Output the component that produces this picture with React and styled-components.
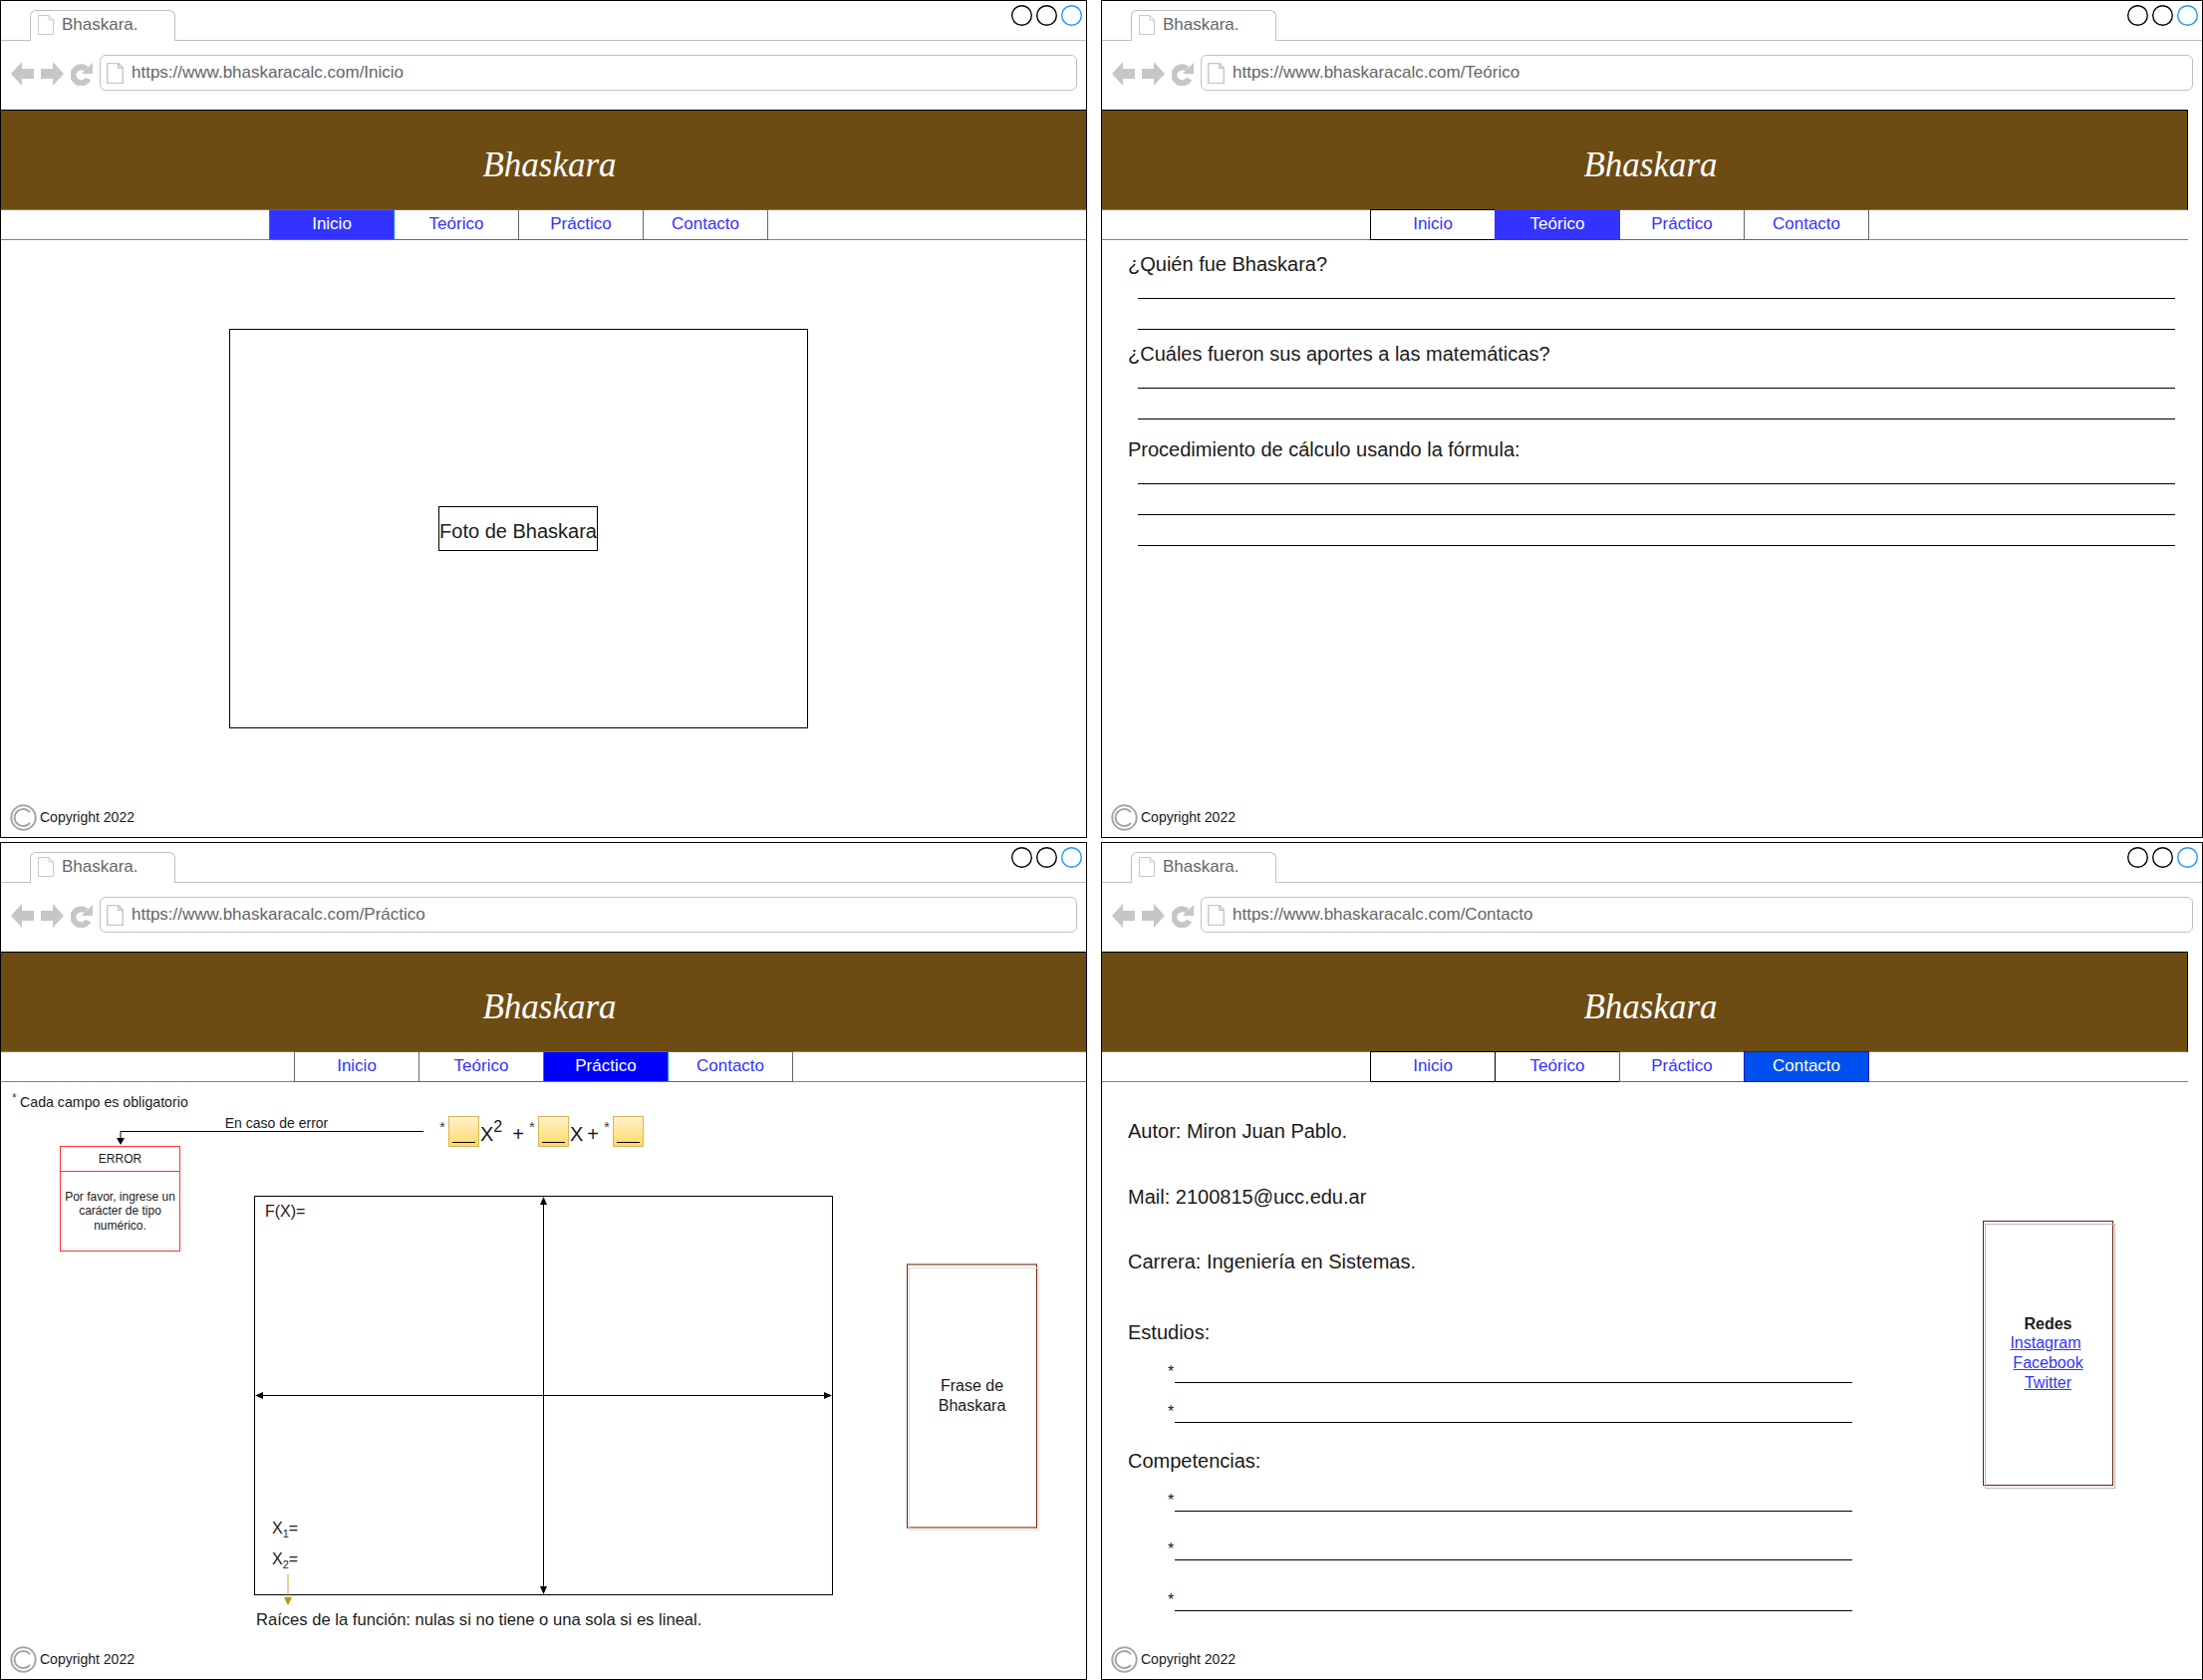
import styled, { createGlobalStyle } from "styled-components";

const GlobalStyle = createGlobalStyle`
  html, body { margin: 0; padding: 0; background: #fff; }
  body { font-family: "Liberation Sans", Arial, sans-serif; color: #1a1a1a; }
  * { box-sizing: border-box; }
`;

const Sheet = styled.div`
  display: grid;
  grid-template-columns: 1091px 1106px;
  grid-template-rows: 841px 841px;
  column-gap: 14px;
  row-gap: 4px;
  width: 2211px;
  height: 1686px;
  overflow: hidden;
`;

const Window = styled.section`
  display: flex;
  flex-direction: column;
  border: 1px solid #000;
  overflow: hidden;
`;

const TabBar = styled.div`
  display: flex;
  height: 40px;
  flex: none;
  padding: 0 4px 0 29px;
  border-bottom: 1px solid #c0c0c0;
`;

const BrowserTab = styled.div`
  display: flex;
  align-items: center;
  gap: 8px;
  width: 146px;
  height: 31px;
  margin-top: 9px;
  padding: 0 0 2px 7px;
  background: #fff;
  border: 1px solid #c0c0c0;
  border-bottom: 0;
  border-radius: 6px 6px 0 0;
  font-size: 17px;
  color: #666;
`;

const Controls = styled.div`
  display: flex;
  gap: 4px;
  margin: 4px 0 0 auto;
`;

const Dot = styled.span`
  width: 21px;
  height: 21px;
  border-radius: 50%;
  box-shadow: inset 0 0 0 1.4px ${p => p.$blue ? "#2196f3" : "#000"};
`;

const Toolbar = styled.div`
  display: flex;
  align-items: flex-start;
  height: 69px;
  flex: none;
  padding: 14px 9px 0 10px;
`;

const NavIcon = styled.svg`
  flex: none;
  margin: 7px 7px 0 0;
  fill: #c6c6c6;
`;

const UrlBar = styled.div`
  display: flex;
  flex: 1;
  align-items: center;
  gap: 8px;
  height: 36px;
  padding-left: 6px;
  border: 1px solid #c0c0c0;
  border-radius: 6px;
  font-size: 17px;
  color: #666;
`;

const Page = styled.div`
  display: flex;
  flex: 1;
  flex-direction: column;
  width: ${p => p.$wide ? "1090px" : "100%"};
  min-height: 0;
`;

const Banner = styled.header`
  display: flex;
  align-items: center;
  justify-content: center;
  flex: none;
  height: 101px;
  padding: 10px 0 0 12px;
  background: #6d4c13;
  border-top: 1px solid #000;
  border-bottom: 1px solid #808080;
  border-right: ${p => p.$edge ? "1px solid #000" : "0"};
`;

const Title = styled.h1`
  margin: 0;
  font-family: "Liberation Serif", "Times New Roman", serif;
  font-size: 35px;
  font-style: italic;
  font-weight: 400;
  color: #fff;
`;

const Nav = styled.nav`
  display: flex;
  align-items: flex-start;
  flex: none;
  height: 30px;
  padding-left: ${p => p.$offset}px;
  border-bottom: 1px solid #808080;
`;

const NavTab = styled.a`
  display: flex;
  align-items: center;
  justify-content: center;
  position: relative;
  width: 126px;
  height: 31px;
  margin: -1px 0 0 -1px;
  padding-bottom: 1px;
  font-size: 17px;
  background: ${p => p.$fill || "#fff"};
  color: ${p => p.$fill ? "#fff" : "#3333ff"};
  z-index: ${p => p.$fill ? 1 : 0};
  border: 1px solid ${p => p.$fill ? p.$line : p.$dark ? "#000" : "#666"};
`;

const Body = styled.main`
  display: flex;
  flex: 1;
  flex-direction: column;
  min-height: 0;
`;

const Footer = styled.footer`
  display: flex;
  align-items: center;
  gap: 3px;
  flex: none;
  height: 26px;
  margin: auto 0 7px 9px;
  font-size: 14px;
`;

/* Inicio */
const PhotoFrame = styled.div`
  display: flex;
  align-items: center;
  justify-content: center;
  width: 581px;
  height: 401px;
  margin: 89px 0 0 229px;
  border: 1px solid #000;
`;

const PhotoLabel = styled.div`
  display: flex;
  align-items: center;
  justify-content: center;
  width: 160px;
  height: 45px;
  margin-right: 1px;
  padding-top: 6px;
  font-size: 20px;
  border: 1px solid #000;
`;

/* Teorico */
const TheoryBlock = styled.div`
  margin: ${p => p.$top}px 0 0 26px;
`;

const Question = styled.h2`
  margin: 0 0 -8px;
  font-size: 20px;
  font-weight: 400;
  line-height: 24px;
`;

const TheoryRule = styled.div`
  width: 1041px;
  height: 1px;
  margin: 30px 0 0 10px;
  background: #000;
`;

/* Practico */
const Note = styled.p`
  margin: 10px 0 6px 11px;
  font-size: 14.2px;
  line-height: 16px;
`;

const Star = styled.sup`
  display: inline-block;
  width: ${p => p.$w || 9}px;
  font-size: 12px;
  line-height: 1;
  vertical-align: 5px;
  color: #444;
`;

const TopRow = styled.div`
  display: flex;
  height: 30px;
  padding-left: 59px;
`;

const ErrorLink = styled.div`
  display: flex;
  flex-direction: column;
  align-items: center;
  width: 365px;
  height: 30px;
  font-size: 14px;
`;

const ErrorLabel = styled.span`
  margin-top: -1px;
  padding-left: 70px;
  line-height: 16px;
`;

const Formula = styled.div`
  display: flex;
  align-items: flex-start;
  height: 31px;
  margin-left: 16px;
`;

const FormulaStar = styled.span`
  width: 9px;
  margin-left: ${p => p.$gap || 0}px;
  padding-top: 2px;
  font-size: 15px;
  color: #444;
`;

const FieldBox = styled.div`
  display: flex;
  justify-content: center;
  align-items: flex-end;
  width: 31px;
  height: 31px;
  padding-bottom: 1px;
  background: linear-gradient(#fff2cc, #ffd966);
  border: 1px solid #d6b656;
`;

const FieldBlank = styled.span`
  width: 23px;
  height: 1px;
  margin-bottom: 2px;
  background: #000;
`;

const Letter = styled.span`
  margin-left: 1px;
  font-size: 20px;
  line-height: 36px;
`;

const Power = styled.span`
  font-size: 16px;
  line-height: 22px;
`;

const Plus = styled.span`
  margin-left: ${p => p.$gap}px;
  font-size: 20px;
  line-height: 36px;
`;

const MainRow = styled.div`
  display: flex;
  align-items: flex-start;
`;

const ErrorBox = styled.div`
  display: flex;
  flex-direction: column;
  flex: none;
  width: 121px;
  height: 106px;
  margin-left: 59px;
  border: 1px solid #ff3333;
  font-size: 12px;
  text-align: center;
`;

const ErrorHead = styled.div`
  display: flex;
  align-items: center;
  justify-content: center;
  height: 25px;
  border-bottom: 1px solid #ff3333;
`;

const ErrorText = styled.div`
  display: flex;
  flex: 1;
  align-items: center;
  justify-content: center;
  line-height: 14.5px;
`;

const GraphColumn = styled.div`
  flex: none;
  margin: 50px 0 0 74px;
`;

const Graph = styled.div`
  display: flex;
  flex-direction: column;
  position: relative;
  width: 581px;
  height: 401px;
  padding: 5px 0 24px 10px;
  border: 1px solid #000;
  font-size: 16px;
  line-height: 20px;
`;

const Axes = styled.svg`
  position: absolute;
  top: -1px;
  left: -1px;
`;

const RootArrow = styled.svg`
  position: absolute;
  top: 379px;
  left: 27px;
`;

const RootLabel = styled.div`
  margin: ${p => p.$top || 0}px 0 0 7px;

  sub {
    font-size: 11px;
    line-height: 0;
  }
`;

const Caption = styled.p`
  margin: 15px 0 0 2px;
  font-size: 16.6px;
  line-height: 20px;
`;

const NoteCard = styled.div`
  display: flex;
  flex-direction: column;
  align-items: center;
  justify-content: center;
  position: relative;
  flex: none;
  width: 131px;
  height: ${p => p.$h}px;
  margin: ${p => p.$top}px 0 0 ${p => p.$left}px;
  border: 1px solid #6d1f00;
  border-color: ${p => p.$soft ? "#b58a7a #6d1f00" : "#6d1f00"};
  border-top-width: ${p => p.$soft ? 2 : 1}px;
  border-bottom-width: ${p => p.$soft ? 2 : 1}px;
  font-size: 16px;
  line-height: 19.6px;
  text-align: center;

  /* the offset grey frame drawn behind the card */
  &::before {
    content: "";
    position: absolute;
    inset: 2px -3px -4px 1px;
    border: 1px solid ${p => p.$soft ? "#ddd" : "#bbb"};
  }
`;

/* Contacto */
const ContactColumn = styled.div`
  flex: none;
  width: 884px;
  padding-left: 26px;
`;

const ContactLine = styled.p`
  margin: ${p => p.$top}px 0 0;
  font-size: 20px;
  line-height: 24px;
`;

const Bullet = styled.div`
  display: flex;
  align-items: flex-end;
  height: 20px;
  margin: ${p => p.$top}px 0 0 40px;
  font-size: 16px;
`;

const BulletStar = styled.span`
  width: 7px;
  align-self: flex-start;
`;

const BulletRule = styled.span`
  width: 680px;
  height: 1px;
  background: #000;
`;

const SocialLink = styled.a`
  padding-right: ${p => p.$shift || 0}px;
  color: #3333ff;
  text-decoration: underline;
`;

function PageIcon({ width = 16, height = 20, thick }) {
  return (
    <svg width={width} height={height} viewBox="0 0 16 20">
      <path d="M.5.5H11L15.5 5V19.5H.5Z M11 .5V5H15.5" fill="#fff" stroke="#c8c8c8" strokeWidth={thick ? 1.6 : 1} />
    </svg>
  );
}

function CopyrightIcon() {
  return (
    <svg width="27" height="27" viewBox="0 0 27 27" fill="none" stroke="#a6a6a6">
      <circle cx="13.5" cy="13.5" r="12.2" strokeWidth="2" />
      <path d="M20 8.2A8.6 8.6 0 1 0 20 18.8" strokeWidth="2" />
    </svg>
  );
}

const TABS = ["Inicio", "Teórico", "Práctico", "Contacto"];

function BrowserWindow({ slug, active, fill, line, dark = [], offset = 270, wide, children }) {
  return (
    <Window>
      <TabBar>
        <BrowserTab>
          <PageIcon />
          Bhaskara.
        </BrowserTab>
        <Controls>
          <Dot />
          <Dot />
          <Dot $blue />
        </Controls>
      </TabBar>
      <Toolbar>
        <NavIcon width="23" height="24" viewBox="0 0 23 24"><path d="M0 12 11 0V7H23V17H11V24Z" /></NavIcon>
        <NavIcon width="23" height="24" viewBox="0 0 23 24"><path d="M23 12 12 0V7H0V17H12V24Z" /></NavIcon>
        <NavIcon width="22" height="24" viewBox="0 0 22 24">
          <path d="M17.5 17A8 8 0 1 1 15.5 7.2" fill="none" stroke="#c6c6c6" strokeWidth="6" />
          <path d="M22 1V12H11Z" />
        </NavIcon>
        <UrlBar>
          <PageIcon width="17" height="21" thick />
          {`https://www.bhaskaracalc.com/${slug}`}
        </UrlBar>
      </Toolbar>
      <Page $wide={wide}>
        <Banner $edge={wide}><Title>Bhaskara</Title></Banner>
        <Nav $offset={offset}>
          {TABS.map(tab => (
            <NavTab key={tab} $fill={tab === active ? fill : null} $line={line} $dark={dark.includes(tab)}>
              {tab}
            </NavTab>
          ))}
        </Nav>
        <Body>
          {children}
          <Footer>
            <CopyrightIcon />
            Copyright 2022
          </Footer>
        </Body>
      </Page>
    </Window>
  );
}

function InicioPage() {
  return (
    <PhotoFrame>
      <PhotoLabel>Foto de Bhaskara</PhotoLabel>
    </PhotoFrame>
  );
}

const THEORY = [
  { q: "¿Quién fue Bhaskara?", rules: 2, top: 12 },
  { q: "¿Cuáles fueron sus aportes a las matemáticas?", rules: 2, top: 12 },
  { q: "Procedimiento de cálculo usando la fórmula:", rules: 3, top: 18 },
];

function TeoricoPage() {
  return (
    <>
      {THEORY.map(item => (
        <TheoryBlock key={item.q} $top={item.top}>
          <Question>{item.q}</Question>
          {Array.from({ length: item.rules }, (_, i) => <TheoryRule key={i} />)}
        </TheoryBlock>
      ))}
    </>
  );
}

function Field() {
  return <FieldBox><FieldBlank /></FieldBox>;
}

function PracticoPage() {
  return (
    <>
      <Note><Star $w={8}>*</Star>Cada campo es obligatorio</Note>
      <TopRow>
        <ErrorLink>
          <ErrorLabel>En caso de error</ErrorLabel>
          <svg width="365" height="15" viewBox="0 0 365 15">
            <path d="M365 .5H61V9" fill="none" stroke="#000" />
            <path d="M57 7H65L61 14Z" fill="#000" />
          </svg>
        </ErrorLink>
        <Formula>
          <FormulaStar>*</FormulaStar>
          <Field />
          <Letter>X</Letter>
          <Power>2</Power>
          <Plus $gap={10}>+</Plus>
          <FormulaStar $gap={5}>*</FormulaStar>
          <Field />
          <Letter>X</Letter>
          <Plus $gap={4}>+</Plus>
          <FormulaStar $gap={5}>*</FormulaStar>
          <Field />
        </Formula>
      </TopRow>
      <MainRow>
        <ErrorBox>
          <ErrorHead>ERROR</ErrorHead>
          <ErrorText>Por favor, ingrese un<br />carácter de tipo<br />numérico.</ErrorText>
        </ErrorBox>
        <GraphColumn>
          <Graph>
            <Axes width="581" height="401" viewBox="0 0 581 401">
              <path d="M290.5 2V399M2 200.5H579" stroke="#000" fill="none" />
              <path d="M290.5 1 287 9H294ZM290.5 400 287 392H294ZM1 200.5 9 197V204ZM580 200.5 572 197V204Z" fill="#000" />
            </Axes>
            <span>F(X)=</span>
            <RootLabel $top={298}>X<sub>1</sub>=</RootLabel>
            <RootLabel $top={11}>X<sub>2</sub>=</RootLabel>
            <RootArrow width="12" height="32" viewBox="0 0 12 32">
              <path d="M6 0V24" stroke="#c2a032" fill="none" />
              <path d="M2 23H10L6 31Z" fill="#b8960b" />
            </RootArrow>
          </Graph>
          <Caption>Raíces de la función: nulas si no tiene o una sola si es lineal.</Caption>
        </GraphColumn>
        <NoteCard $soft $h={266} $top={118} $left={74}>Frase de<br />Bhaskara</NoteCard>
      </MainRow>
    </>
  );
}

function ContactoPage() {
  return (
    <MainRow>
      <ContactColumn>
        <ContactLine $top={37}>Autor: Miron Juan Pablo.</ContactLine>
        <ContactLine $top={42}>Mail: 2100815@ucc.edu.ar</ContactLine>
        <ContactLine $top={41}>Carrera: Ingeniería en Sistemas.</ContactLine>
        <ContactLine $top={47}>Estudios:</ContactLine>
        <Bullet $top={19}><BulletStar>*</BulletStar><BulletRule /></Bullet>
        <Bullet $top={20}><BulletStar>*</BulletStar><BulletRule /></Bullet>
        <ContactLine $top={26}>Competencias:</ContactLine>
        <Bullet $top={19}><BulletStar>*</BulletStar><BulletRule /></Bullet>
        <Bullet $top={29}><BulletStar>*</BulletStar><BulletRule /></Bullet>
        <Bullet $top={31}><BulletStar>*</BulletStar><BulletRule /></Bullet>
      </ContactColumn>
      <NoteCard $h={266} $top={139} $left={0}>
        <b>Redes</b>
        <SocialLink $shift={5}>Instagram</SocialLink>
        <SocialLink>Facebook</SocialLink>
        <SocialLink>Twitter</SocialLink>
      </NoteCard>
    </MainRow>
  );
}

export default function App() {
  return (
    <>
      <GlobalStyle />
      <Sheet>
        <BrowserWindow slug="Inicio" active="Inicio" fill="#3333ff" line="#007fff">
          <InicioPage />
        </BrowserWindow>
        <BrowserWindow slug="Teórico" active="Teórico" fill="#3333ff" line="#3333ff" dark={["Inicio"]} wide>
          <TeoricoPage />
        </BrowserWindow>
        <BrowserWindow slug="Práctico" active="Práctico" fill="#0000ff" line="#007fff" offset={295}>
          <PracticoPage />
        </BrowserWindow>
        <BrowserWindow slug="Contacto" active="Contacto" fill="#0050ef" line="#001dbc" dark={["Inicio", "Teórico"]} wide>
          <ContactoPage />
        </BrowserWindow>
      </Sheet>
    </>
  );
}
